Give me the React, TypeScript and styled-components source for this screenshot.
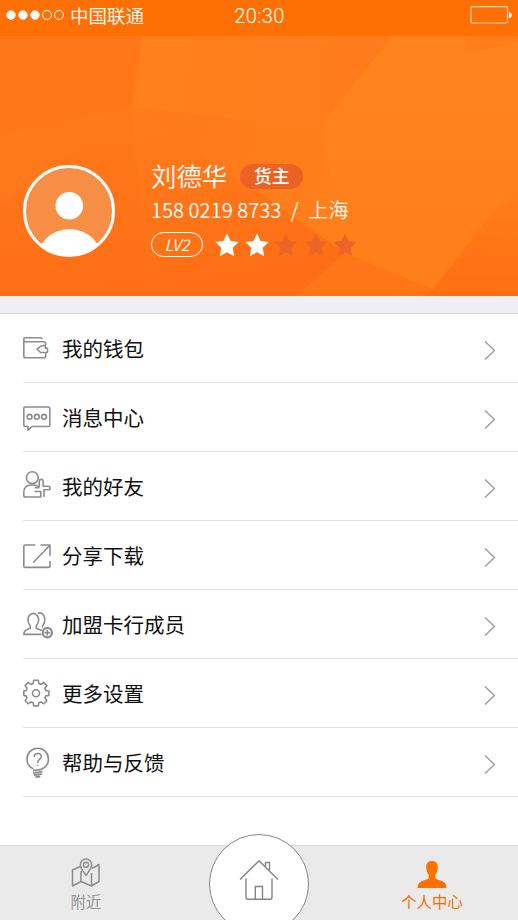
import React from 'react';
import styled, { createGlobalStyle } from 'styled-components';

const GlobalStyle = createGlobalStyle`
  * { box-sizing: border-box; }
  body {
    margin: 0;
    background: #fff;
    font-family: "Noto Sans CJK SC", "Noto Sans", sans-serif;
  }
`;

const Screen = styled.div`
  width: 518px;
  height: 920px;
  display: flex;
  flex-direction: column;
  overflow: hidden;
  background: #fff;
`;

const StatusBar = styled.header`
  height: 36px;
  flex: none;
  display: grid;
  grid-template-columns: 1fr auto 1fr;
  background: #ff7004;
  color: #fff;
  padding: 0 6px;
`;

const Carrier = styled.div`
  display: flex;
  align-items: center;
  gap: 6px;
  height: 30px;
  font-size: 18.5px;
  font-weight: 350;
  white-space: nowrap;
`;

const Clock = styled.time`
  font: 300 20px/33px Roboto, sans-serif;
  letter-spacing: 0.35px;
  padding-left: 1px;
`;

const BatterySlot = styled.div`
  display: flex;
  justify-content: flex-end;
  padding-top: 6px;
`;

const Hero = styled.section`
  position: relative;
  height: 260px;
  flex: none;
  overflow: hidden;
  color: #fff;
`;

const Facets = styled.svg`
  position: absolute;
  inset: 0;
`;

const Profile = styled.div`
  position: relative;
  display: flex;
  gap: 36px;
  padding: 125px 0 0 23px;
`;

const Avatar = styled.svg`
  flex: none;
  margin-top: 4px;
`;

const Details = styled.div`
  display: flex;
  flex-direction: column;
`;

const NameLine = styled.div`
  display: flex;
  align-items: center;
  gap: 13px;
  height: 31px;
`;

const Name = styled.span`
  font-size: 25.4px;
  font-weight: 350;
  line-height: 36px;
  margin-top: -4px;
`;

const Role = styled.span`
  width: 63px;
  height: 25px;
  border-radius: 13px;
  background: #ec6224;
  font-size: 18px;
  font-weight: 500;
  line-height: 23px;
  text-align: center;
`;

const Contact = styled.div`
  display: flex;
  align-items: center;
  height: 36px;
  padding-bottom: 1px;
  font-size: 20.1px;
  font-weight: 350;
  white-space: pre;
`;

const Slash = styled.span`
  width: 27px;
  text-align: center;
`;

const LevelLine = styled.div`
  display: flex;
  align-items: center;
  gap: 12px;
  height: 32px;
`;

const Level = styled.span`
  width: 52px;
  height: 25px;
  border: 1px solid #fff;
  border-radius: 13px;
  font-size: 16px;
  font-style: italic;
  font-weight: 350;
  line-height: 22px;
  text-align: center;
`;

const Stars = styled.div`
  display: flex;
  gap: 5.6px;
  padding-top: 1px;
`;

const Divider = styled.div`
  height: 18px;
  flex: none;
  background: #efeef3;
  border-bottom: 1px solid #d4d3d6;
`;

const Menu = styled.nav`
  flex: 1;
  padding-left: 23px;
`;

const MenuRow = styled.a`
  display: flex;
  align-items: center;
  height: 69px;
  border-bottom: 1px solid #e0e0e0;
  padding-right: 22px;
  color: #111;
`;

const IconSlot = styled.span`
  width: 39px;
  height: 32px;
  flex: none;
  padding-top: 0.7px;
`;

const MenuLabel = styled.span`
  flex: 1;
  font-size: 20.5px;
  line-height: 30px;
`;

const Chevron = styled.svg`
  margin-top: 4px;
`;

const TabBar = styled.footer`
  display: grid;
  grid-template-columns: 172px 1fr 172px;
  height: 75px;
  flex: none;
  background: #eaeaea;
  border-top: 1px solid #d8d8d8;
`;

const Tab = styled.a<{ $active?: boolean }>`
  display: flex;
  flex-direction: column;
  align-items: center;
  padding-top: 11px;
  color: ${(p) => (p.$active ? '#ff6a00' : '#929292')};
  font-size: 15.4px;
  line-height: 22px;
  font-weight: 400;
`;

const TabIcon = styled.svg`
  flex: none;
`;

const HomeButton = styled.a`
  width: 100px;
  height: 100px;
  margin-top: -12px;
  justify-self: center;
  border: 1.5px solid #858585;
  border-radius: 50%;
  background: #fff;
  display: flex;
  justify-content: center;
  padding-top: 24px;
`;

const icons: Record<string, React.ReactNode> = {
  wallet: (
    <g transform="translate(0 .8)">
      <path d="M20.5 8H2.5Q.8 8 .8 6.5V5Q.8 4 2 4H17.5Q19 4 19 5.5M.8 6V22.2Q.8 24 2.5 24H21Q22.7 24 22.7 22.2V19.5M20.5 8Q22.7 8 22.7 10V11.5" />
      <path d="M22.8 11.5 18 12.2 14.2 15.4 17.6 18.7 24.5 18.5V14.5H22.3V11.2M18.2 15.5h.5" />
    </g>
  ),
  message: (
    <>
      <path d="M2 5H25.5Q26.8 5 26.8 6.2V23.3Q26.8 24.5 25.5 24.5H9L5 28.2V24.5H2Q.8 24.5 .8 23.3V6.2Q.8 5 2 5Z" />
      <circle cx="6.6" cy="14.8" r="2.4" /><circle cx="13.8" cy="14.8" r="2.4" /><circle cx="21" cy="14.8" r="2.4" />
    </>
  ),
  friend: (
    <>
      <circle cx="9.3" cy="6.7" r="5.9" />
      <path d="M15.5 15.4Q13.5 14 10 14H8Q.8 14 .8 21.7V24.2Q.8 26 2.5 26H17.8V20.5H11.5" />
      <path d="M16.3 16.5V10.3Q16.3 8.4 18.2 8.4T20.1 10.3V15.2H25.3Q27 15.2 27 17T25.3 18.8H21V26M11.8 16.6H16.3" />
    </>
  ),
  share: <path d="M12.3 5H2.3Q.8 5 .8 6.5V25.9Q.8 27.4 2.3 27.4H25.5Q27 27.4 27 25.9V21M27 15.7V5H17.5M26.8 5.2 10.3 22.5" />,
  member: (
    <>
      <path d="M18.5 25.4H.8Q.6 21.2 7.3 19.3V17.1Q3.5 11.6 6 6.9 10.5 1.9 14.5 6.9 17.3 11.6 13.2 17.1V19.3L18.8 21.6" />
      <path d="M14.8 4.5Q18.3 2.6 21 6.7 23.3 11.9 19.5 17.1V18.4" />
      <circle cx="24.3" cy="23.6" r="4.7" strokeWidth="2.2" /><path d="M24.3 20.7v5.8M21.4 23.6h5.8" />
    </>
  ),
  settings: (
    <>
      <path d="M10.7 3.9H15.3L15.8 7.2 18 8.1 20.8 6.1 23.9 9.3 21.9 12 22.8 14.2 25.9 14.7V19.1L22.8 19.6 21.9 21.8 23.9 24.5 20.8 27.5 18 25.6 15.8 26.5 15.3 29.6H10.7L10.2 26.5 8 25.6 5.2 27.5 2.1 24.5 4 21.8 3.1 19.6.8 19.1V14.7L3.1 14.2 4 12 2.1 9.3 5.2 6.1 8 8.1 10.2 7.2Z" transform="translate(0 -1.7)" />
      <circle cx="13" cy="15.2" r="3.5" />
    </>
  ),
  help: (
    <>
      <path d="M10.5 21.8Q4 19 4 12.3C4 6 8.5 1.2 14.7 1.2S25.4 6 25.4 12.3Q25.4 19 19 21.8" />
      <path d="M11.1 10Q11.1 6.5 14.7 6.5T18.3 9.7C18.3 12.2 14.7 12.3 14.7 15.5V16M14.7 17.7v1.4" />
      <path d="M10 23.6 19.5 22.2M10 26.1 19.5 24.7M10.8 28.2 19 27.2M12.5 30 17.3 29.6" strokeWidth="1.8" />
    </>
  ),
};

const rows = [
  ['wallet', '我的钱包'],
  ['message', '消息中心'],
  ['friend', '我的好友'],
  ['share', '分享下载'],
  ['member', '加盟卡行成员'],
  ['settings', '更多设置'],
  ['help', '帮助与反馈'],
];

export default function App() {
  return (
    <>
      <GlobalStyle />
      <Screen>
        <StatusBar>
          <Carrier>
            <svg width="58" height="12" viewBox="0 0 58 12" fill="#fff" stroke="#fff">
              {[5, 17, 29].map((x) => <circle key={x} cx={x} cy="6" r="4.2" />)}
              {[41, 53].map((x) => <circle key={x} cx={x} cy="6" r="4.5" fill="none" />)}
            </svg>
            中国联通
          </Carrier>
          <Clock>20:30</Clock>
          <BatterySlot>
            <svg width="42" height="18" viewBox="0 0 42 18">
              <rect x=".9" y=".6" width="36.6" height="16.4" rx="1.5" fill="none" stroke="#ffd2ae" strokeWidth="1.2" />
              <path d="M39 6Q41.8 6.5 41.8 9T39 12Z" fill="#fff" />
            </svg>
          </BatterySlot>
        </StatusBar>

        <Hero>
          <Facets width="518" height="260" viewBox="0 36 518 260">
            <defs>
              <linearGradient id="base" x1="0" y1="0" x2="0" y2="1">
                <stop offset="0" stopColor="#ff7a1b" />
                <stop offset="1" stopColor="#ff6d14" />
              </linearGradient>
              <linearGradient id="mid" gradientUnits="userSpaceOnUse" x1="140" y1="60" x2="360" y2="80">
                <stop offset="0" stopColor="#ff811e" />
                <stop offset="1" stopColor="#ff7b1b" />
              </linearGradient>
              <linearGradient id="centre" gradientUnits="userSpaceOnUse" x1="200" y1="120" x2="230" y2="290">
                <stop offset="0" stopColor="#ff7b1b" />
                <stop offset="1" stopColor="#ff6d14" />
              </linearGradient>
              <linearGradient id="bright" x1="0" y1="0" x2="0" y2="1">
                <stop offset="0" stopColor="#ff841d" />
                <stop offset="1" stopColor="#ff7f1a" />
              </linearGradient>
              <linearGradient id="shoulder" gradientUnits="userSpaceOnUse" x1="200" y1="130" x2="330" y2="180">
                <stop offset="0" stopColor="#ff7a1b" />
                <stop offset="1" stopColor="#ff7f1b" />
              </linearGradient>
              <linearGradient id="corner" x1="0" y1="0" x2="0" y2="1">
                <stop offset="0" stopColor="#ff7d1a" />
                <stop offset="1" stopColor="#ff6e13" />
              </linearGradient>
              <linearGradient id="left" gradientUnits="userSpaceOnUse" x1="60" y1="110" x2="70" y2="290">
                <stop offset="0" stopColor="#ff7a1b" />
                <stop offset="1" stopColor="#ff6e15" />
              </linearGradient>
            </defs>
            <path d="M0 36H518V296H0Z" fill="url(#base)" />
            <path d="M0 36H143L132 107 0 135Z" fill="#ff7719" />
            <path d="M0 135 132 107 75 150 0 206Z" fill="#ff791b" />
            <path d="M132 107 75 150 0 206V296H258V160Z" fill="url(#left)" />
            <path d="M132 107 320 128 336 200 345 253 296 296H150Z" fill="url(#centre)" />
            <path d="M132 107 320 128 336 200 345 253 258 192Z" fill="url(#shoulder)" />
            <path d="M143 36H392L320 128 132 107Z" fill="url(#mid)" />
            <path d="M392 36H518V296H430L345 253 336 200 320 128Z" fill="url(#bright)" />
            <path d="M466 36H518V42L466 54Z" fill="#ff7e1b" />
            <path d="M518 192 492 213 434 288 424 296H518Z" fill="url(#corner)" />
            <path d="M345 253 432 289 424 296H296Z" fill="#ff7518" />
          </Facets>
          <Profile>
            <Avatar width="92" height="93" viewBox="0 0 92 93">
              <defs><clipPath id="face"><circle cx="46" cy="46" r="45" /></clipPath></defs>
              <circle cx="46" cy="46" r="44.5" fill="#f78e45" stroke="#fff" strokeWidth="3" />
              <circle cx="46.3" cy="40.8" r="13.8" fill="#fff" />
              <circle cx="46.5" cy="97.5" r="33.5" fill="#fff" clipPath="url(#face)" />
            </Avatar>
            <Details>
              <NameLine><Name>刘德华</Name><Role>货主</Role></NameLine>
              <Contact>158 0219 8733<Slash>/</Slash>上海</Contact>
              <LevelLine>
                <Level>LV2</Level>
                <Stars>
                  {[0, 1, 2, 3, 4].map((i) => (
                    <svg key={i} width="24" height="24" viewBox="0 0 24 24">
                      <path d="M12 .5 15.6 8 23.6 9.1 17.7 14.8 19.2 23.2 12 19.2 4.8 23.2 6.3 14.8.4 9.1 8.4 8Z" fill={i < 2 ? '#fff' : '#ed6526'} />
                    </svg>
                  ))}
                </Stars>
              </LevelLine>
            </Details>
          </Profile>
        </Hero>

        <Divider />

        <Menu>
          {rows.map(([icon, label]) => (
            <MenuRow key={icon}>
              <IconSlot>
                <svg width="32" height="32" viewBox="0 0 32 32" fill="none" stroke="#8c8c8c" strokeWidth="1.6" strokeLinejoin="round">
                  {icons[icon]}
                </svg>
              </IconSlot>
              <MenuLabel>{label}</MenuLabel>
              <Chevron width="12" height="20" viewBox="0 0 12 20" fill="none" stroke="#999" strokeWidth="1.3">
                <path d="M1 1.5 10.5 10.5 1 19.5" />
              </Chevron>
            </MenuRow>
          ))}
        </Menu>

        <TabBar>
          <Tab>
            <TabIcon width="30" height="33" viewBox="0 0 30 33" fill="none" stroke="#8c8c8c" strokeWidth="1.5" strokeLinejoin="round">
              <path d="M9 9.5 1.5 13V29L10 24.5 20.5 29 28 24.5V7.5L21 11.5M10 14V24.5M20.5 16V29" />
              <path d="M15 18.5Q9.3 10.8 9.3 7.8A5.7 5.7 0 0 1 20.7 7.8Q20.7 10.8 15 18.5Z" />
              <circle cx="15" cy="7.8" r="2.5" />
            </TabIcon>
            附近
          </Tab>
          <HomeButton>
            <svg width="40" height="42" viewBox="0 0 40 42" fill="none" stroke="#858585" strokeWidth="1.4">
              <path d="M1 20.5 20 1.8 39 20.5M26.5 8V3.5H30.5V12M7 19.5V38Q7 40.2 9 40.2H31Q33 40.2 33 38V19.5M16.3 40V27.5H23.5V40" />
            </svg>
          </HomeButton>
          <Tab $active>
            <TabIcon width="30" height="33" viewBox="0 0 30 33" fill="#ff6f00">
              <path d="M15 4C18.8 4 21 6.5 20.8 10.5Q20.7 15 18.2 18V21Q19 22.3 23.5 23.5 29.5 25 29.5 31H.5Q.5 25 6.5 23.5 11 22.3 11.8 21V18Q9.3 15 9.2 10.5C9 6.5 11.2 4 15 4Z" />
            </TabIcon>
            个人中心
          </Tab>
        </TabBar>
      </Screen>
    </>
  );
}
